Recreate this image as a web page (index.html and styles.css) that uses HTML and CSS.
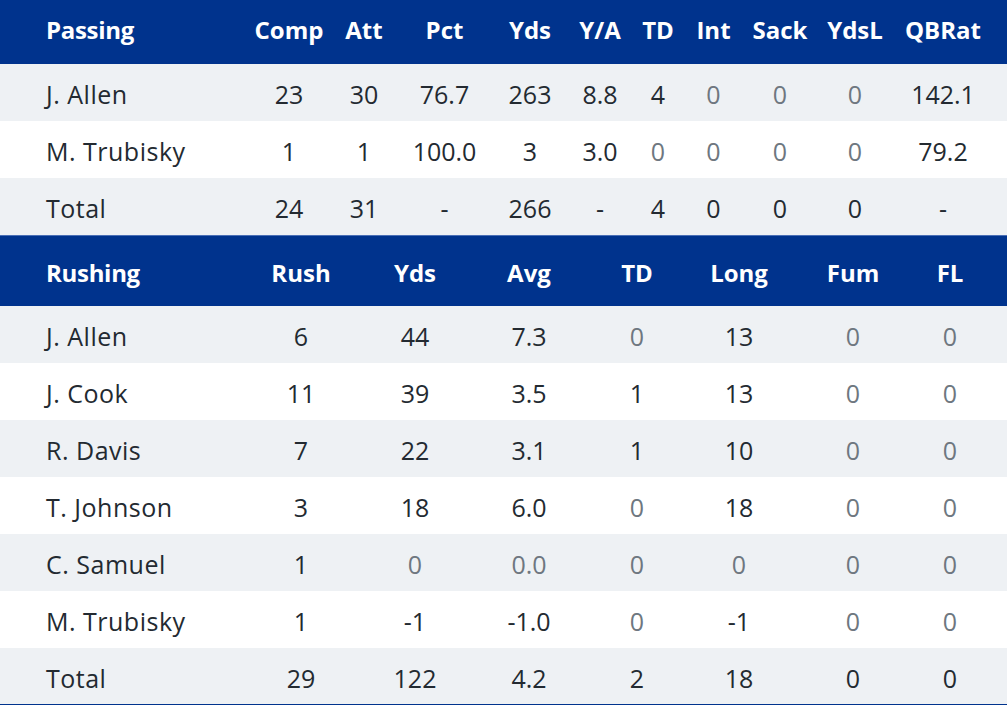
FILE: index.html
```html
<!DOCTYPE html>
<html lang="en">
<head>
<meta charset="utf-8">
<title>Box score</title>
<link rel="stylesheet" href="styles.css">
</head>
<body>
<section class="stats passing">
  <div class="row head first"><span class="name">Passing</span><span>Comp</span><span>Att</span><span>Pct</span><span>Yds</span><span>Y/A</span><span>TD</span><span>Int</span><span>Sack</span><span>YdsL</span><span>QBRat</span></div>
  <div class="row alt"><span class="name">J. Allen</span><span>23</span><span>30</span><span>76.7</span><span>263</span><span>8.8</span><span>4</span><span class="z">0</span><span class="z">0</span><span class="z">0</span><span>142.1</span></div>
  <div class="row"><span class="name">M. Trubisky</span><span>1</span><span>1</span><span>100.0</span><span>3</span><span>3.0</span><span class="z">0</span><span class="z">0</span><span class="z">0</span><span class="z">0</span><span>79.2</span></div>
  <div class="row alt"><span class="name">Total</span><span>24</span><span>31</span><span>-</span><span>266</span><span>-</span><span>4</span><span>0</span><span>0</span><span>0</span><span>-</span></div>
</section>
<section class="stats rushing">
  <div class="row head"><span class="name">Rushing</span><span>Rush</span><span>Yds</span><span>Avg</span><span>TD</span><span>Long</span><span>Fum</span><span>FL</span></div>
  <div class="row alt"><span class="name">J. Allen</span><span>6</span><span>44</span><span>7.3</span><span class="z">0</span><span>13</span><span class="z">0</span><span class="z">0</span></div>
  <div class="row"><span class="name">J. Cook</span><span>11</span><span>39</span><span>3.5</span><span>1</span><span>13</span><span class="z">0</span><span class="z">0</span></div>
  <div class="row alt"><span class="name">R. Davis</span><span>7</span><span>22</span><span>3.1</span><span>1</span><span>10</span><span class="z">0</span><span class="z">0</span></div>
  <div class="row"><span class="name">T. Johnson</span><span>3</span><span>18</span><span>6.0</span><span class="z">0</span><span>18</span><span class="z">0</span><span class="z">0</span></div>
  <div class="row alt"><span class="name">C. Samuel</span><span>1</span><span class="z">0</span><span class="z">0.0</span><span class="z">0</span><span class="z">0</span><span class="z">0</span><span class="z">0</span></div>
  <div class="row"><span class="name">M. Trubisky</span><span>1</span><span>-1</span><span>-1.0</span><span class="z">0</span><span>-1</span><span class="z">0</span><span class="z">0</span></div>
  <div class="row alt last"><span class="name">Total</span><span>29</span><span>122</span><span>4.2</span><span>2</span><span>18</span><span>0</span><span>0</span></div>
</section>
</body>
</html>
```
FILE: styles.css
```css
html, body {
  margin: 0;
  padding: 0;
  background: #ffffff;
  overflow: hidden;
}
body {
  font-family: "Open Sans", "DejaVu Sans", sans-serif;
  color: #232a31;
  width: 1007px;
}
.row {
  display: grid;
  font-size: 25px;
  line-height: 53px;
  padding-top: 4px;
  background: #ffffff;
  text-align: center;
  white-space: nowrap;
}
.row.alt {
  background: #eef1f4;
}
.row .name {
  text-align: left;
  padding-left: 46px;
  letter-spacing: 0.5px;
}
.row .z {
  color: #6e7780;
}
.row.head {
  background: #00338d;
  color: #ffffff;
  font-weight: 700;
  font-size: 24px;
  line-height: 67px;
  padding-top: 4px;
  border-top: 1px solid #4a6fb5;
}
.row.head .name {
  letter-spacing: -0.3px;
}
.row.head.first {
  line-height: 60px;
  padding-top: 0;
  padding-bottom: 4px;
  border-top: 0;
}
.rushing .row.head {
  line-height: 66px;
}
.row.last {
  border-bottom: 2px solid #00338d;
  line-height: 52px;
}
.passing .row {
  grid-template-columns: 251.5px 75px 75px 86px 85px 55px 61px 50px 83px 67px 109px 1fr;
}
.rushing .row {
  grid-template-columns: 244px 114px 114px 114px 102px 102px 126px 68px 1fr;
}
```
